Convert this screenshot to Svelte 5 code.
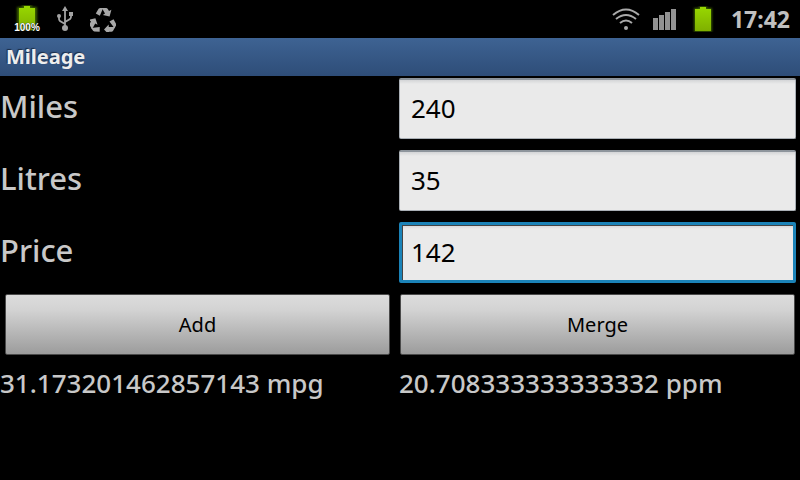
<script>
  // Litres per imperial gallon, scaled by 1e8 so that the ratio is rounded only once.
  const SCALE = 100000000;
  const GALLON = 454609188;

  let miles = $state('240');
  let litres = $state('35');
  let price = $state('142');

  const mpg = $derived(Number(litres) ? (Number(miles) * GALLON) / (Number(litres) * SCALE) : 0);
  const ppm = $derived(Number(miles) ? (Number(litres) * Number(price)) / Number(miles) : 0);
</script>

<div class="screen">
  <header class="status">
    <div class="group left">
      <span class="charge">
        <svg width="28" height="26" viewBox="0 0 28 26" aria-hidden="true">
          <defs>
            <linearGradient id="charge-fill" x1="0" y1="0" x2="0" y2="1">
              <stop offset="0" stop-color="#98d800" />
              <stop offset="1" stop-color="#7fb000" />
            </linearGradient>
          </defs>
          <path class="halo" d="M9 0h10v2h5v24H4V2h5z" />
          <path d="M11 1h6v2h5v22H6V3h5z" fill="url(#charge-fill)" />
        </svg>
        <span class="percent">100%</span>
      </span>
      <svg class="usb" width="18" height="26" viewBox="0 0 18 26" aria-hidden="true">
        <path d="M9 4v17M9 18l-5-3q-1-1-1-2v-3M9 16l5-3q1-1 1-2V8" fill="none" stroke="#a3a3a3" stroke-width="1.8" />
        <path d="M9 0l3 5H6z" fill="#a3a3a3" />
        <circle cx="9" cy="22" r="3" fill="#a3a3a3" />
        <circle cx="3" cy="10" r="2" fill="#a3a3a3" />
        <path d="M13 6h4v4h-4z" fill="#a3a3a3" />
      </svg>
      <svg class="recycle" width="26" height="26" viewBox="0 0 26 26" aria-hidden="true">
        <defs>
          <g id="recycle-arrow">
            <path d="M5.8 7.4L8.6 2.8Q9.4 2 10.4 2h2.8L9.8 9.8z" />
            <path d="M11.8 2H16q1.2 0 1.8 1l1.2 2 2.4-1.2-1.8 6.6-6.8-1.4 2.2-1.4z" />
          </g>
        </defs>
        <g fill="#a8a8a8">
          <use href="#recycle-arrow" />
          <use href="#recycle-arrow" transform="rotate(120 13 15.4)" />
          <use href="#recycle-arrow" transform="rotate(240 13 15.4)" />
        </g>
      </svg>
    </div>
    <div class="group right">
      <svg class="wifi" width="30" height="24" viewBox="0 0 30 24" aria-hidden="true">
        <g fill="none" stroke="#aaa" stroke-width="2">
          <path d="M2 8q13-11 26 0" />
          <path d="M5 12q10-8 20 0" />
          <path d="M9 16q6-5 12 0" />
        </g>
        <circle cx="15" cy="21" r="2" fill="#aaa" />
      </svg>
      <svg class="signal" width="24" height="22" viewBox="0 0 24 22" aria-hidden="true">
        <path d="M0 10h5v12H0zM6 7h5v15H6zM12 4h5v18h-5zM18 1h5v21h-5z" fill="#929292" />
      </svg>
      <svg class="battery" width="22" height="26" viewBox="0 0 22 26" aria-hidden="true">
        <path class="halo" d="M7 0h8v2h5v24H2V2h5z" />
        <path d="M8 1h6v2h5v22H3V3h5z" fill="url(#charge-fill)" />
      </svg>
      <time>17:42</time>
    </div>
  </header>

  <h1>Mileage</h1>

  <main>
    <label for="miles">Miles</label>
    <input id="miles" type="text" inputmode="decimal" bind:value={miles} />
    <label for="litres">Litres</label>
    <input id="litres" type="text" inputmode="decimal" bind:value={litres} />
    <label for="price">Price</label>
    <input id="price" class="active" type="text" inputmode="decimal" bind:value={price} />
    <button class="add" type="button">Add</button>
    <button class="merge" type="button">Merge</button>
    <output for="miles litres">{mpg} mpg</output>
    <output for="miles litres price">{ppm} ppm</output>
  </main>
</div>

<style>
  :global(body) {
    margin: 0;
    background: #000;
  }

  .screen {
    min-height: 100vh;
    background: #000;
    color: #c8c8c8;
    font-family: 'Noto Sans', 'Open Sans', sans-serif;
  }

  .status {
    display: flex;
    justify-content: space-between;
    height: 38px;
    padding: 0 10px 0 13px;
  }

  .group {
    display: flex;
    align-items: center;
  }

  .charge {
    display: flex;
    flex-direction: column;
    align-items: center;
    width: 28px;
    margin-right: 15px;
  }

  .percent {
    margin-top: -8px;
    color: #fff;
    font: bold 10px/10px 'Liberation Sans', sans-serif;
    text-shadow: 0 0 1px #000, 0 1px 1px #000;
    z-index: 1;
  }

  .halo {
    fill: #3c6000;
    filter: blur(1px);
  }

  .recycle {
    margin-left: 16px;
  }

  .signal {
    margin-left: 12px;
  }

  .battery {
    margin-left: 15px;
  }

  time {
    margin-left: 17px;
    color: #c0c0c0;
    font-size: 23px;
    line-height: 38px;
    font-weight: 700;
  }

  h1 {
    margin: 0;
    padding: 0 6px;
    background: linear-gradient(#3e6393, #2e4d78);
    color: #eee;
    font-size: 20px;
    line-height: 38px;
    font-weight: 700;
    text-shadow: -1px -1px 1px #1c2d46;
  }

  main {
    display: grid;
    grid-template-columns: 399fr 401fr;
    grid-auto-rows: 72px;
  }

  label {
    font-size: 31px;
    line-height: 61px;
    font-weight: 500;
  }

  input {
    box-sizing: border-box;
    width: auto;
    min-width: 0;
    height: 61px;
    margin: 2px 4px 0 0;
    padding: 0 11px 2px;
    border: 1px solid #a9afb5;
    border-top: 2px solid #8e959c;
    border-radius: 2px;
    outline: none;
    background: linear-gradient(#d4d5d7, #eaeaea 4px);
    color: #000;
    font: 26px 'Noto Sans', 'Open Sans', sans-serif;
  }

  input.active {
    padding: 0 9px 2px;
    border: 3px solid #1b83b8;
    box-shadow: inset 1px 1px 0 #444;
  }

  button {
    box-sizing: border-box;
    height: 61px;
    padding: 0;
    border: 1px solid #4a4a4a;
    border-radius: 2px;
    background: linear-gradient(#dcdcdc, #d3d3d3 25%, #9c9c9c);
    color: #000;
    font: 20px 'Noto Sans', 'Open Sans', sans-serif;
  }

  .add {
    margin: 2px 9px 0 5px;
  }

  .merge {
    margin: 2px 5px 0 1px;
  }

  output {
    font-size: 26px;
    line-height: 38px;
    font-weight: 500;
    white-space: nowrap;
  }
</style>
